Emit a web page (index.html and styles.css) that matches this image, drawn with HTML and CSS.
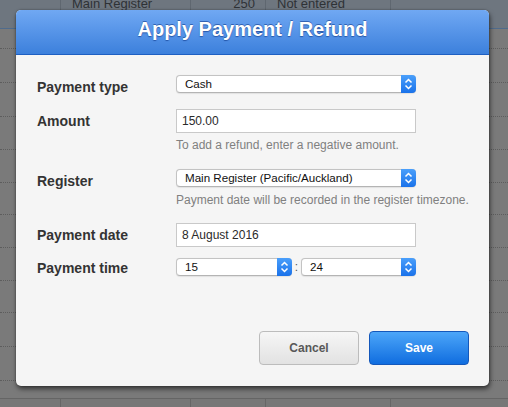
FILE: index.html
```html
<!DOCTYPE html>
<html>
<head>
<meta charset="utf-8">
<link rel="stylesheet" href="styles.css">
</head>
<body>
<div class="bg">
  <div class="row top">
    <div class="cell c1"></div>
    <div class="cell c2">Main Register</div>
    <div class="cell c3 num">250</div>
    <div class="cell c4">Not entered</div>
    <div class="cell c5"></div>
  </div>
  <div class="row dot h19"></div>
  <div class="row dot h33"></div>
  <div class="row dot h33"></div>
  <div class="row dot h32"></div>
  <div class="row dot h32"></div>
  <div class="row dot h31"></div>
  <div class="row dot h32"></div>
  <div class="row dot h32"></div>
  <div class="row dot h31"></div>
  <div class="row dot h33"></div>
  <div class="row dot h33"></div>
  <div class="row solid h17"></div>
  <div class="row bottom">
    <div class="cell c1"></div>
    <div class="cell c2"></div>
    <div class="cell c3"></div>
    <div class="cell c4"></div>
    <div class="cell c5"></div>
  </div>
</div>

<div class="dialog">
  <div class="dlg-head">Apply Payment / Refund</div>
  <div class="dlg-body">
    <div class="form">
      <div class="field f1">
        <div class="lbl">Payment type</div>
        <div class="ctl">
          <div class="select"><span class="sel-text">Cash</span><span class="arr"><svg width="15" height="18" viewBox="0 0 15 18"><path d="M4.5 7.5 L7.5 4.5 L10.5 7.5 M4.5 10.5 L7.5 13.5 L10.5 10.5" fill="none" stroke="#fff" stroke-width="1.5"/></svg></span></div>
        </div>
      </div>
      <div class="field f2">
        <div class="lbl">Amount</div>
        <div class="ctl">
          <div class="input">150.00</div>
          <div class="help h-a">To add a refund, enter a negative amount.</div>
        </div>
      </div>
      <div class="field f3">
        <div class="lbl">Register</div>
        <div class="ctl">
          <div class="select"><span class="sel-text">Main Register (Pacific/Auckland)</span><span class="arr"><svg width="15" height="18" viewBox="0 0 15 18"><path d="M4.5 7.5 L7.5 4.5 L10.5 7.5 M4.5 10.5 L7.5 13.5 L10.5 10.5" fill="none" stroke="#fff" stroke-width="1.5"/></svg></span></div>
          <div class="help h-b">Payment date will be recorded in the register timezone.</div>
        </div>
      </div>
      <div class="field f4">
        <div class="lbl">Payment date</div>
        <div class="ctl">
          <div class="input">8 August 2016</div>
        </div>
      </div>
      <div class="field f5">
        <div class="lbl lbl-short">Payment time</div>
        <div class="ctl time">
          <div class="select hour"><span class="sel-text">15</span><span class="arr"><svg width="15" height="18" viewBox="0 0 15 18"><path d="M4.5 7.5 L7.5 4.5 L10.5 7.5 M4.5 10.5 L7.5 13.5 L10.5 10.5" fill="none" stroke="#fff" stroke-width="1.5"/></svg></span></div>
          <span class="colon">:</span>
          <div class="select minute"><span class="sel-text">24</span><span class="arr"><svg width="15" height="18" viewBox="0 0 15 18"><path d="M4.5 7.5 L7.5 4.5 L10.5 7.5 M4.5 10.5 L7.5 13.5 L10.5 10.5" fill="none" stroke="#fff" stroke-width="1.5"/></svg></span></div>
        </div>
      </div>
    </div>
    <div class="footer">
      <button class="btn cancel">Cancel</button>
      <button class="btn save">Save</button>
    </div>
  </div>
</div>
</body>
</html>
```

FILE: styles.css
```css
html, body {
  margin: 0;
  padding: 0;
}
body {
  width: 508px;
  height: 407px;
  overflow: hidden;
  background: #7a7a7a;
  font-family: "Liberation Sans", Arial, sans-serif;
  position: relative;
}

/* background table */
.bg {
  width: 508px;
}
.row {
  display: flex;
  box-sizing: border-box;
}
.row.top {
  height: 29px;
  background: #6e767f;
  border-bottom: 1px solid #4f6b8c;
  align-items: flex-start;
}
.row.dot { border-bottom: 1px dotted #5d5d5d; }
.row.solid { border-bottom: 1px solid #656565; }
.h19 { height: 20px; }
.h33 { height: 34px; }
.h32 { height: 33px; }
.h31 { height: 32px; }
.h17 { height: 18px; }
.row.bottom {
  height: 20px;
  background: #777;
}
.cell {
  box-sizing: border-box;
  height: 100%;
  border-right: 1px solid #5f6770;
  font-size: 13px;
  color: #2e3236;
  line-height: 16px;
}
.row.top .cell span, .row.top .cell { padding-top: 0; }
.row.top .cell { margin-top: 0; }
.row.top .c2, .row.top .c3, .row.top .c4 { position: relative; top: -4px; height: calc(100% + 4px); }
.row.bottom .cell { border-right-color: #666; }
.c1 { width: 61px; }
.c2 { width: 130px; padding-left: 11px; }
.c3 { width: 75px; text-align: right; padding-right: 10px; }
.c4 { width: 125px; padding-left: 11px; }
.c5 { flex: 1; border-right: none; }

/* dialog */
.dialog {
  position: absolute;
  left: 16px;
  top: 10px;
  width: 473px;
  height: 376px;
  background: #f5f5f5;
  border-radius: 5px;
  box-shadow: 1px 3px 5px rgba(0, 0, 0, 0.55), 0 0 2px rgba(0, 0, 0, 0.4);
  display: flex;
  flex-direction: column;
}
.dlg-head {
  box-sizing: border-box;
  height: 45px;
  border-bottom: 1px solid #1e5fc2;
  border-radius: 5px 5px 0 0;
  background: linear-gradient(#70a8f3, #3c80dc);
  color: #fff;
  font-weight: bold;
  font-size: 20px;
  text-align: center;
  line-height: 39px;
  padding-bottom: 5px;
  text-shadow: 0 -1px 0 rgba(10, 50, 130, 0.55), 0 1px 1px rgba(10, 50, 130, 0.6);
}
.dlg-body {
  flex: 1;
  display: flex;
  flex-direction: column;
  padding: 20px 20px 21px 21px;
}
.form {
  display: flex;
  flex-direction: column;
}
.field {
  display: flex;
  align-items: flex-start;
}
.f2 { margin-top: 10px; }
.f3 { margin-top: 16px; }
.f4 { margin-top: 15px; }
.f5 { margin-top: 11px; }
.lbl {
  width: 139px;
  flex: none;
  font-weight: bold;
  font-size: 14px;
  color: #333;
  line-height: 24px;
}
.lbl-short { line-height: 20px; }
.ctl {
  width: 240px;
  display: flex;
  flex-direction: column;
}
.select {
  box-sizing: border-box;
  height: 18px;
  border: 1px solid #c3c3c3;
  border-bottom-color: #b4b4b4;
  border-radius: 4px;
  background: #fff;
  display: flex;
  align-items: center;
  box-shadow: 0 0.5px 1px rgba(0, 0, 0, 0.08);
}
.sel-text {
  flex: 1;
  padding-left: 8px;
  font-size: 11.6px;
  color: #111;
  line-height: 16px;
  white-space: nowrap;
}
.arr {
  width: 15px;
  height: 18px;
  margin: -1px -1px -1px 0;
  border-radius: 0 4px 4px 0;
  background: linear-gradient(#4a9ffb, #1a72ea);
  display: flex;
}
.input {
  box-sizing: border-box;
  height: 24px;
  border: 1px solid #c9c9c9;
  background: #fff;
  font-size: 12px;
  color: #2a2a2a;
  line-height: 22px;
  padding: 0 5px;
}
.help {
  font-size: 12px;
  color: #808080;
  line-height: 16px;
  white-space: nowrap;
}
.h-a { margin-top: 4px; }
.h-b { margin-top: 5px; }
.time {
  flex-direction: row;
  align-items: center;
}
.hour { width: 116px; }
.minute { width: 115px; }
.colon {
  width: 9px;
  text-align: center;
  font-size: 12px;
  color: #555;
  line-height: 18px;
}
.footer {
  margin-top: auto;
  display: flex;
  justify-content: flex-end;
  gap: 10px;
}
.btn {
  box-sizing: border-box;
  width: 100px;
  height: 34px;
  border-radius: 4px;
  font-family: "Liberation Sans", Arial, sans-serif;
  font-weight: bold;
  font-size: 12px;
  padding: 0;
  margin: 0;
}
.cancel {
  border: 1px solid #bcbcbc;
  background: linear-gradient(#f6f6f6, #e2e2e2);
  color: #585858;
}
.save {
  border: 1px solid #1458bb;
  background: linear-gradient(#4ca6f9, #106ddf);
  color: #fff;
}
```
